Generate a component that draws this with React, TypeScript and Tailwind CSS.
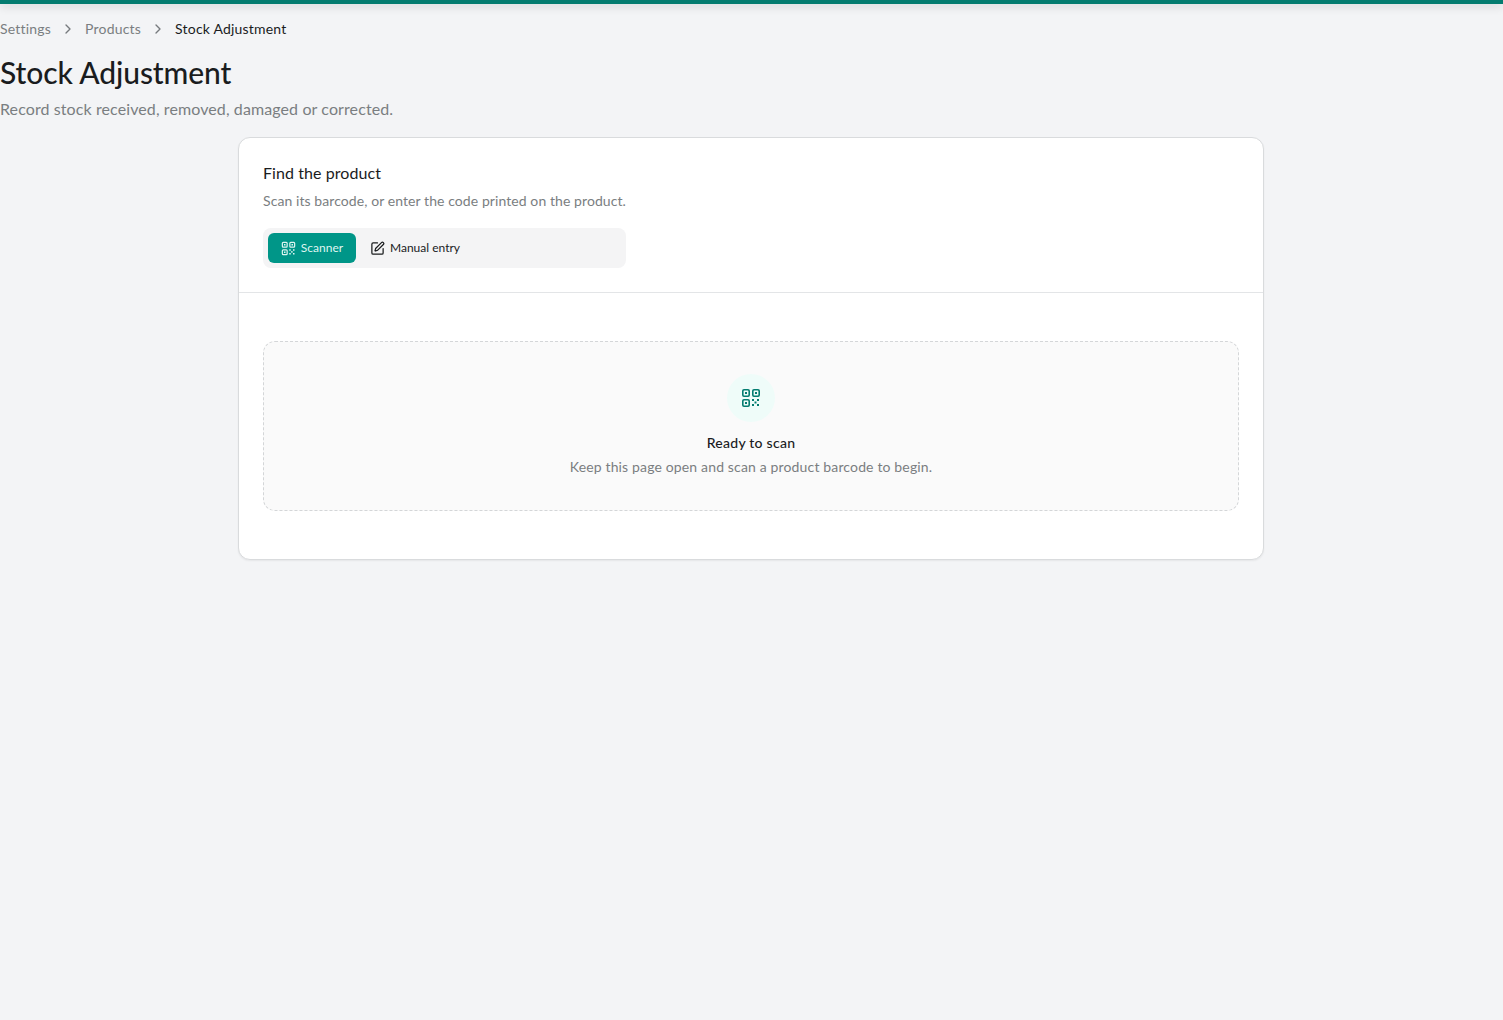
import { ChevronRight, SquarePen } from "lucide-react"

function QrIcon({ className }: { className?: string }) {
  return (
    <svg viewBox="0 0 20 20" fill="none" className={className}>
      <g stroke="currentColor" strokeWidth="1.6">
        <rect x="1.8" y="1.8" width="6.4" height="6.4" rx="1.2" />
        <rect x="11.8" y="1.8" width="6.4" height="6.4" rx="1.2" />
        <rect x="1.8" y="11.8" width="6.4" height="6.4" rx="1.2" />
      </g>
      <g fill="currentColor">
        <rect x="4" y="4" width="2" height="2" />
        <rect x="14" y="4" width="2" height="2" />
        <rect x="4" y="14" width="2" height="2" />
        <rect x="11" y="11" width="2" height="2" />
        <rect x="16" y="11" width="2" height="2" />
        <rect x="13.5" y="13.5" width="2" height="2" />
        <rect x="11" y="16" width="2" height="2" />
        <rect x="16" y="16" width="2" height="2" />
      </g>
    </svg>
  )
}

export default function App() {
  return (
    <div className="min-h-screen bg-[#f3f4f6] pr-px font-['Lato','Noto_Sans',sans-serif] text-[#1a1c1e]">
      <div className="-mr-px h-1 bg-[#047c70] shadow-[0_2px_10px_rgba(0,0,0,0.18)]" />

      <nav className="flex items-center pt-[15px] text-sm leading-5 tracking-[0.2px]">
        <span className="text-[#7a7e81]">Settings</span>
        <ChevronRight className="mx-[9px] h-4 w-4 text-[#767a7d]" />
        <span className="text-[#7a7e81]">Products</span>
        <ChevronRight className="mx-[9px] h-4 w-4 text-[#767a7d]" />
        <span>Stock Adjustment</span>
      </nav>

      <h1 className="mt-[15px] text-[30px] leading-9 font-medium tracking-[-0.1px]">Stock Adjustment</h1>
      <p className="mt-[7px] text-base leading-6 tracking-[0.1px] text-[#7a7e81]">Record stock received, removed, damaged or corrected.</p>

      <div className="mx-auto mt-4 w-[1026px] rounded-xl border border-[#d9dbdd] bg-white shadow-[0_1px_2px_rgba(0,0,0,0.06)]">
        <div className="border-b border-[#e3e5e7] px-6 pt-[23px] pb-6">
          <h2 className="text-base leading-6 tracking-[0.07px]">Find the product</h2>
          <p className="mt-1.5 text-sm leading-5 tracking-[0.08px] text-[#7a7e81]">Scan its barcode, or enter the code printed on the product.</p>
          <div className="mt-[17px] flex h-10 w-[363px] items-center gap-1 rounded-lg bg-[#f4f4f5] px-[5px] text-xs">
            <button className="flex h-[30px] w-[88px] items-center justify-center gap-[5px] rounded-md bg-[#009688] text-[#dff5f1]">
              <QrIcon className="h-[15px] w-[15px]" />
              Scanner
            </button>
            <button className="flex h-[30px] items-center gap-[5px] px-2.5">
              <SquarePen className="h-[15px] w-[15px]" />
              Manual entry
            </button>
          </div>
        </div>

        <div className="px-6 py-12">
          <div className="flex h-[170px] flex-col items-center rounded-xl border border-dashed border-[#d4d6d8] bg-[#fafafa] pt-[32px]">
            <div className="flex h-12 w-12 items-center justify-center rounded-full bg-[#effcf9] text-[#047c70]">
              <QrIcon className="h-5 w-5" />
            </div>
            <p className="mt-[11px] text-sm leading-5 font-medium tracking-[0.25px]">Ready to scan</p>
            <p className="mt-1 text-sm leading-5 tracking-[0.15px] text-[#7a7e81]">Keep this page open and scan a product barcode to begin.</p>
          </div>
        </div>
      </div>
    </div>
  )
}
